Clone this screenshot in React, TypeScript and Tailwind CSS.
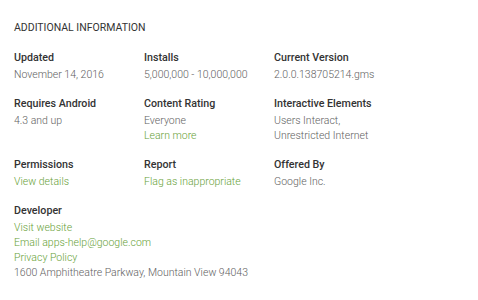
import React from "react"

type Line = { text: string, link?: boolean }

interface InfoCellProps {
    label: string,
    lines: Line[],
}

const InfoCell: React.FC<InfoCellProps> = (props) => {
    return (
        <div className="flex flex-col">
            <span className="text-[10.7px] font-medium text-[#333333] leading-[15px]">{props.label}</span>
            <div className="flex flex-col mt-[2px]">
                {props.lines.map((l, i) => (
                    <span key={i} className={`text-[10.5px] font-light leading-[15px] whitespace-nowrap ${l.link ? "text-[#689f38]" : "text-[#616161]"}`}>
                        {l.text}
                    </span>
                ))}
            </div>
        </div>
    )
}

export default function App() {
    return (
        <div className="w-[478px] h-[300px] bg-white px-[14px] pt-[21px] font-['Roboto',sans-serif]">
            <h2 className="text-[10.5px] leading-[14px] text-[#333333] font-normal">ADDITIONAL INFORMATION</h2>
            <div className="grid grid-cols-[130px_130px_130px] gap-y-[14px] mt-[15px]">
                <InfoCell label="Updated" lines={[{ text: "November 14, 2016" }]} />
                <InfoCell label="Installs" lines={[{ text: "5,000,000 - 10,000,000" }]} />
                <InfoCell label="Current Version" lines={[{ text: "2.0.0.138705214.gms" }]} />

                <InfoCell label="Requires Android" lines={[{ text: "4.3 and up" }]} />
                <InfoCell label="Content Rating" lines={[{ text: "Everyone" }, { text: "Learn more", link: true }]} />
                <InfoCell label="Interactive Elements" lines={[{ text: "Users Interact," }, { text: "Unrestricted Internet" }]} />

                <InfoCell label="Permissions" lines={[{ text: "View details", link: true }]} />
                <InfoCell label="Report" lines={[{ text: "Flag as inappropriate", link: true }]} />
                <InfoCell label="Offered By" lines={[{ text: "Google Inc." }]} />

                <InfoCell label="Developer" lines={[
                    { text: "Visit website", link: true },
                    { text: "Email apps-help@google.com", link: true },
                    { text: "Privacy Policy", link: true },
                    { text: "1600 Amphitheatre Parkway, Mountain View 94043" },
                ]} />
            </div>
        </div>
    )
}
